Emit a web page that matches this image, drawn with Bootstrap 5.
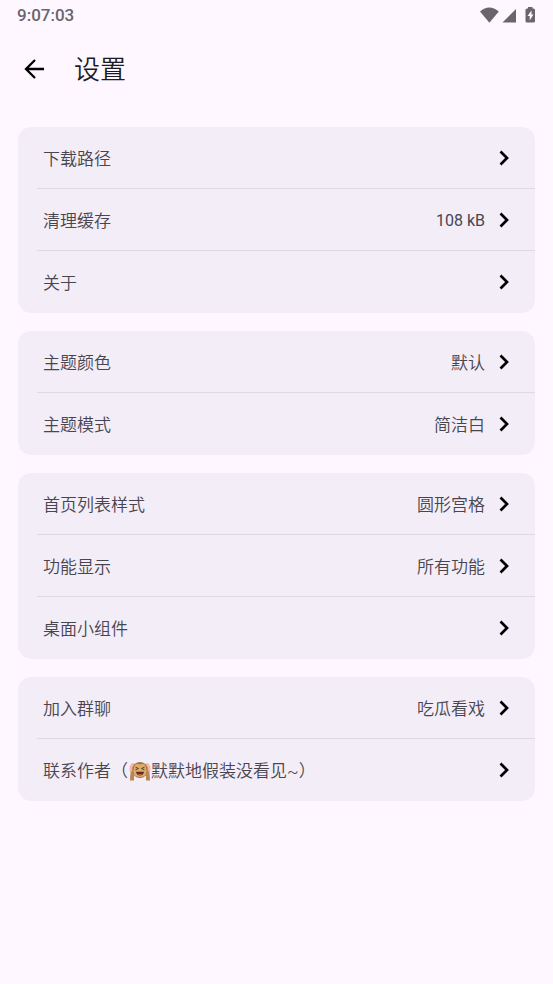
<!DOCTYPE html>
<html lang="zh-CN">
<head>
<meta charset="utf-8">
<meta name="viewport" content="width=device-width, initial-scale=1">
<title>设置</title>
<link href="https://cdn.jsdelivr.net/npm/bootstrap@5.3.0/dist/css/bootstrap.min.css" rel="stylesheet">
<style>
body { background: #fef7ff; color: #1d1b20; font-family: Roboto, "Noto Sans CJK SC", sans-serif; }
.status-bar { height: 30px; padding: 1px 17px 0 17px; font-size: 17px; font-weight: 500; color: #69656b; }
.app-bar { height: 78px; padding: 0 20px; gap: 26px; }
.app-bar h1 { font-size: 26px; line-height: 38px; font-weight: 350; padding-top: 2px; }
.back-btn { width: 28px; height: 28px; color: #000; }
.settings { padding: 19px 18px; gap: 18px; }
.settings .list-group { --bs-list-group-bg: #f3edf7; --bs-list-group-border-radius: 13px; overflow: hidden; }
.setting { height: 62px; padding: 0 20px 0 25px; border: 0; font-size: 17px; line-height: 24px; color: #49454f; }
.setting span { padding-top: 1px; font-weight: 350; }
.setting:not(:last-child) { background-image: linear-gradient(#dfd9e2, #dfd9e2); background-size: calc(100% - 19px) 1px; background-position: right bottom; background-repeat: no-repeat; }
.setting:hover { color: #49454f; background-color: #f3edf7; }
.setting .size-value { font-size: 16px; font-weight: 400; }
.chevron { width: 22px; height: 22px; margin-left: 8px; color: #000; }
.emoji { width: 22px; height: 20px; margin: 0 0 0 1px; }
</style>
<script defer src="https://cdn.jsdelivr.net/npm/bootstrap@5.3.0/dist/js/bootstrap.bundle.min.js"></script>
</head>
<body>
<svg class="d-none" aria-hidden="true">
  <symbol id="chevron" viewBox="0 0 22 22"><path d="M7.500 4.500 14 11 7.500 17.500" fill="none" stroke="currentColor" stroke-width="2.700"/></symbol>
</svg>
<div class="status-bar d-flex align-items-center justify-content-between">
  <span>9:07:03</span>
  <svg width="56" height="18" viewBox="0 0 56 18" fill="#69656b" aria-hidden="true">
    <path d="M0 4.500Q9.200-3.300 18.800 4.500L9.400 15.800Z"/>
    <path d="M36 2V15.500H22.500Z"/>
    <path fill-rule="evenodd" d="M48 1.500V0h4.500v1.500h1q1.500 0 1.500 1.500v11q0 1.500-1.500 1.500h-6.500q-1.500 0-1.500-1.500V3q0-1.500 1.500-1.500ZM51.500 3.500 47.500 9h2.200v4.500L53.500 7.500h-2Z"/>
  </svg>
</div>
<header class="app-bar d-flex align-items-center">
  <button type="button" class="back-btn btn p-0 border-0 d-flex" aria-label="返回">
    <svg width="28" height="28" viewBox="0 0 28 28" fill="none" stroke="currentColor" stroke-width="2.300" aria-hidden="true"><path d="M24 14H6.500M15 5 6 14l9 9"/></svg>
  </button>
  <h1 class="mb-0">设置</h1>
</header>
<main class="settings d-flex flex-column">
  <div class="list-group">
    <button type="button" class="setting list-group-item list-group-item-action d-flex align-items-center"><span class="me-auto">下载路径</span><svg class="chevron" aria-hidden="true"><use href="#chevron"/></svg></button>
    <button type="button" class="setting list-group-item list-group-item-action d-flex align-items-center"><span class="me-auto">清理缓存</span><span class="size-value">108 kB</span><svg class="chevron" aria-hidden="true"><use href="#chevron"/></svg></button>
    <button type="button" class="setting list-group-item list-group-item-action d-flex align-items-center"><span class="me-auto">关于</span><svg class="chevron" aria-hidden="true"><use href="#chevron"/></svg></button>
  </div>
  <div class="list-group">
    <button type="button" class="setting list-group-item list-group-item-action d-flex align-items-center"><span class="me-auto">主题颜色</span><span>默认</span><svg class="chevron" aria-hidden="true"><use href="#chevron"/></svg></button>
    <button type="button" class="setting list-group-item list-group-item-action d-flex align-items-center"><span class="me-auto">主题模式</span><span>简洁白</span><svg class="chevron" aria-hidden="true"><use href="#chevron"/></svg></button>
  </div>
  <div class="list-group">
    <button type="button" class="setting list-group-item list-group-item-action d-flex align-items-center"><span class="me-auto">首页列表样式</span><span>圆形宫格</span><svg class="chevron" aria-hidden="true"><use href="#chevron"/></svg></button>
    <button type="button" class="setting list-group-item list-group-item-action d-flex align-items-center"><span class="me-auto">功能显示</span><span>所有功能</span><svg class="chevron" aria-hidden="true"><use href="#chevron"/></svg></button>
    <button type="button" class="setting list-group-item list-group-item-action d-flex align-items-center"><span class="me-auto">桌面小组件</span><svg class="chevron" aria-hidden="true"><use href="#chevron"/></svg></button>
  </div>
  <div class="list-group">
    <button type="button" class="setting list-group-item list-group-item-action d-flex align-items-center"><span class="me-auto">加入群聊</span><span>吃瓜看戏</span><svg class="chevron" aria-hidden="true"><use href="#chevron"/></svg></button>
    <button type="button" class="setting list-group-item list-group-item-action d-flex align-items-center">
      <span class="me-auto d-flex align-items-center">联系作者（<svg class="emoji" viewBox="0 0 21 20" role="img" aria-label="捂耳朵的猴子">
        <ellipse cx="3.500" cy="8" rx="3.500" ry="6" fill="#f5b5a6"/><ellipse cx="17.500" cy="8" rx="3.500" ry="6" fill="#f5b5a6"/>
        <ellipse cx="10.500" cy="9" rx="7.800" ry="8" fill="#9d7043"/>
        <path d="M10.500 3.500C8 1.500 4 3.500 4.500 7.500c-2.200 3.500-.5 8.500 6 8.500s8.200-5 6-8.500c.5-4-3.500-6-6-4Z" fill="#dbaa6c"/>
        <path d="m6 6.200 3 1.300-3 1.300m9-2.600-3 1.300 3 1.300" fill="none" stroke="#59402a" stroke-width="1"/>
        <path d="M6.500 10.800h8q-.5 3.700-4 3.700t-4-3.700Z" fill="#59301f"/><path d="M8.300 13.500q2.200-1.200 4.400 0-2.200 1.800-4.400 0Z" fill="#dc6550"/>
        <path d="M2 10Q1 12 .8 14L.5 19.500h4V16L5 14 4 10ZM19 10q1 2 1.200 4l.3 5.500h-4V16L16 14 17 10Z" fill="#b58754"/>
      </svg>默默地假装没看见~）</span><svg class="chevron" aria-hidden="true"><use href="#chevron"/></svg></button>
  </div>
</main>
</body>
</html>
